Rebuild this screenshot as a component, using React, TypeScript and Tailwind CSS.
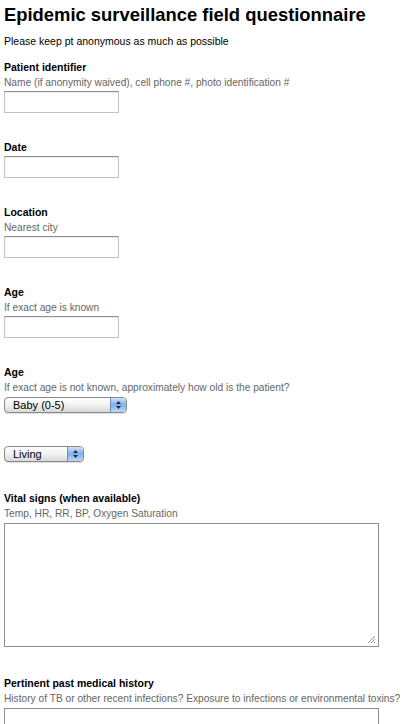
function TextInput() {
  return (
    <div className="mt-[1px] h-[22px] w-[115px] border border-[#c3c3c3] border-t-[#8f8f8f] bg-white shadow-[inset_0_1px_1px_rgba(0,0,0,0.08)]" />
  )
}

function AquaSelect({ value, width }: { value: string; width: string }) {
  return (
    <div
      className={`mt-[2px] flex h-[16px] items-stretch overflow-hidden rounded-[4px] border border-[#8a8a8a] bg-gradient-to-b from-white via-[#f1f1f1] to-[#d9d9d9] shadow-[0_1px_0_rgba(0,0,0,0.12)] ${width}`}
    >
      <div className="flex flex-1 items-center pl-[8px] text-[11px] leading-none text-black">{value}</div>
      <div className="flex w-[16px] flex-col items-center justify-center gap-[2px] border-l border-[#6f8fb8] bg-gradient-to-b from-[#cfe2f8] via-[#7fb0e8] to-[#bcd8f7]">
        <svg width="5" height="3" viewBox="0 0 5 3">
          <path d="M0 3 L2.5 0 L5 3 Z" fill="#1f2c40" />
        </svg>
        <svg width="5" height="3" viewBox="0 0 5 3">
          <path d="M0 0 L2.5 3 L5 0 Z" fill="#1f2c40" />
        </svg>
      </div>
    </div>
  )
}

function TextArea() {
  return (
    <div className="relative mt-[2px] h-[124px] w-[375px] border border-[#8d8d8d] bg-white">
      <svg className="absolute bottom-[2px] right-[2px]" width="9" height="9" viewBox="0 0 9 9">
        <path d="M8 1 L1 8 M8 4 L4 8 M8 7 L7 8" stroke="#9a9a9a" strokeWidth="1" />
      </svg>
    </div>
  )
}

function Label({ children }: { children: React.ReactNode }) {
  return <div className="h-[15px] text-[10.5px] font-bold leading-[15px] text-black">{children}</div>
}

function Help({ children }: { children: React.ReactNode }) {
  return <div className="h-[15px] whitespace-nowrap text-[10.2px] leading-[15px] text-[#666]">{children}</div>
}

export default function App() {
  return (
    <div className="min-h-[724px] bg-white px-[4px] font-['Liberation_Sans',Arial,sans-serif] text-black">
      <h1 className="pt-[3px] text-[18.4px] font-bold leading-[24px]">Epidemic surveillance field questionnaire</h1>
      <p className="mt-[7px] text-[10.5px] leading-[15px]">Please keep pt anonymous as much as possible</p>

      <div className="mt-[11px] mb-[27px]">
        <Label>Patient identifier</Label>
        <Help>Name (if anonymity waived), cell phone #, photo identification #</Help>
        <TextInput />
      </div>

      <div className="mb-[27px]">
        <Label>Date</Label>
        <TextInput />
      </div>

      <div className="mb-[27px]">
        <Label>Location</Label>
        <Help>Nearest city</Help>
        <TextInput />
      </div>

      <div className="mb-[27px]">
        <Label>Age</Label>
        <Help>If exact age is known</Help>
        <TextInput />
      </div>

      <div className="mb-[33px]">
        <Label>Age</Label>
        <Help>If exact age is not known, approximately how old is the patient?</Help>
        <AquaSelect value="Baby (0-5)" width="w-[123px]" />
      </div>

      <div className="mb-[29px]">
        <AquaSelect value="Living" width="w-[80px]" />
      </div>

      <div className="mb-[29px]">
        <Label>Vital signs (when available)</Label>
        <Help>Temp, HR, RR, BP, Oxygen Saturation</Help>
        <TextArea />
      </div>

      <div>
        <Label>Pertinent past medical history</Label>
        <Help>History of TB or other recent infections? Exposure to infections or environmental toxins?</Help>
        <TextArea />
      </div>
    </div>
  )
}
